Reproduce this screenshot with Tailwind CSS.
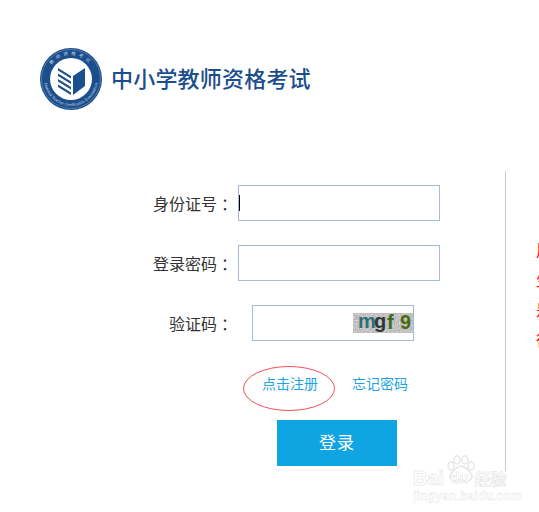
<!DOCTYPE html>
<html lang="zh-CN">
<head>
  <meta charset="UTF-8" />
  <title>中小学教师资格考试</title>
  <script src="https://cdn.jsdelivr.net/npm/@tailwindcss/browser@4"></script>
</head>
<body class="relative w-[539px] h-[512px] overflow-hidden bg-white font-['Noto_Sans_CJK_SC','Noto_Sans',sans-serif]">
  <header class="flex items-center pl-[40px] pt-[48px] gap-[9px]">
    <svg width="62" height="62" viewBox="0 0 62 62" class="shrink-0">
      <circle cx="31" cy="31" r="31" fill="#1b4e8c" />
      <circle cx="31" cy="31" r="29.5" fill="none" stroke="#6f93bb" stroke-width="0.6" />
      <circle cx="31" cy="31" r="21" fill="#fff" />
      <defs>
        <path id="ring-top" d="M7 31a24 24 0 0 1 48 0" />
        <path id="ring-bottom" d="M4 31a27 27 0 0 0 54 0" />
      </defs>
      <text font-size="4.5" fill="#c5d4e5" letter-spacing="3"><textPath href="#ring-top" startOffset="50%" text-anchor="middle">教师资格考试</textPath></text>
      <text font-size="4" fill="#c5d4e5" font-family="Liberation Sans"><textPath href="#ring-bottom" startOffset="50%" text-anchor="middle">National Teacher Certification Examination</textPath></text>
      <path d="M33 28l12-8v18l-12 9z" fill="#1b4e8c" />
      <path d="M18 20l13 8v2.5l-13-8zM18 25.500l13 8v2.500l-13-8zM18 31l13 8v2.500l-13-8zM18 36.500l13 8v2.500l-13-8z" fill="#1b4e8c" />
    </svg>
    <h1 class="-mt-[4px] text-[22px] leading-[30px] font-medium text-[#1b4e8c] tracking-[0.2px]">中小学教师资格考试</h1>
  </header>

  <main class="flex mt-[61px] h-[300px]">
    <form class="w-[505px] shrink-0 pt-[14px]">
      <div class="flex items-center h-[36px] mb-[24px]">
        <label class="w-[238px] pr-[1px] flex justify-end text-[16px] text-[#333]">身份证号<span class="w-[20px] text-right">：</span></label>
        <div class="relative">
          <input class="block w-[202px] h-[36px] border border-[#a5bbd3] outline-none" />
          <span class="absolute left-[1px] top-[10px] w-px h-[16px] bg-black"></span>
        </div>
      </div>
      <div class="flex items-center h-[36px] mb-[24px]">
        <label class="w-[238px] pr-[1px] flex justify-end text-[16px] text-[#333]">登录密码<span class="w-[20px] text-right">：</span></label>
        <input class="block w-[202px] h-[36px] border border-[#a5bbd3] outline-none" />
      </div>
      <div class="flex items-center h-[36px]">
        <label class="w-[238px] pr-[1px] flex justify-end text-[16px] text-[#333]">验证码<span class="w-[20px] text-right">：</span></label>
        <div class="flex items-center justify-end ml-[14px] w-[162px] h-[36px] border border-[#a5bbd3]">
          <svg width="60" height="20" viewBox="0 0 60 20" class="block">
            <filter id="noise"><feTurbulence type="fractalNoise" baseFrequency="0.8" numOctaves="2" /><feColorMatrix values="0 0 0 0 0.45  0 0 0 0 0.45  0 0 0 0 0.45  0 0 0 2.6 -0.7" /></filter>
            <rect width="60" height="20" fill="#d8d8d8" />
            <rect width="60" height="20" filter="url(#noise)" />
            <g font-family="Liberation Sans" font-weight="700" font-size="20">
              <text x="5" y="15" fill="#2f6f78">m</text>
              <text x="21" y="15" fill="#30363c">g</text>
              <text x="34" y="16" fill="#3f6a22">f</text>
              <text x="47" y="16" fill="#4a6a12">9</text>
            </g>
          </svg>
        </div>
      </div>
      <div class="flex items-center h-[20px] mt-[32px] pl-[262px] gap-[34px] text-[14px] text-[#1ea4e2]">
        <a>点击注册</a>
        <a>忘记密码</a>
      </div>
      <button type="button" class="block ml-[277px] mt-[27px] w-[120px] h-[46px] pb-[2px] bg-[#0fa5e3] text-white text-[17px] tracking-[1px]">登录</button>
    </form>
    <aside class="flex-1 pl-[30px] pt-[63px] border-l border-[#cccccc] whitespace-nowrap text-[16px] leading-[30px] text-[#f5001e]">
      <p>用户</p>
      <p>生日</p>
      <p>是否</p>
      <p>很好</p>
    </aside>
  </main>

  <!-- red ellipse drawn over the register link -->
  <svg width="94" height="47" viewBox="0 0 94 47" class="absolute left-[242px] top-[365px]">
    <ellipse cx="47" cy="23.5" rx="45.5" ry="22" fill="none" stroke="#f2505c" stroke-width="1" />
  </svg>

  <!-- watermark -->
  <div class="absolute left-[413px] top-[455px] w-[100px] text-white [-webkit-text-stroke:0.5px_#e0e0e0]">
    <svg width="30" height="28" viewBox="0 0 30 28" class="absolute left-[33px] top-0">
      <g fill="#fff" stroke="#e6e6e6" stroke-width="1.5">
        <ellipse cx="5" cy="11" rx="3" ry="4" />
        <ellipse cx="11" cy="5" rx="3" ry="4" />
        <ellipse cx="19" cy="5" rx="3" ry="4" />
        <ellipse cx="25" cy="11" rx="3" ry="4" />
        <path d="M15 11c-4 0-7 4-11 9-1 4 3 6 6 6 2 0 3-1 5-1s3 1 5 1c3 0 7-2 6-6-4-5-7-9-11-9z" />
      </g>
    </svg>
    <div class="relative flex items-center pt-[13px] h-[33px] font-['Liberation_Sans',sans-serif] font-bold text-[20px] leading-[20px]">
      <span>Bai</span><span class="ml-[6px] text-[15px]">du</span><span class="ml-[6px] text-[16px] font-['Noto_Sans_CJK_SC',sans-serif]">经验</span>
    </div>
    <div class="relative mt-[1px] font-['Liberation_Sans',sans-serif] text-[12px] leading-[14px] font-bold tracking-[0.2px] [-webkit-text-stroke:0.3px_#e0e0e0]">jingyan.baidu.com</div>
  </div>
</body>
</html>
